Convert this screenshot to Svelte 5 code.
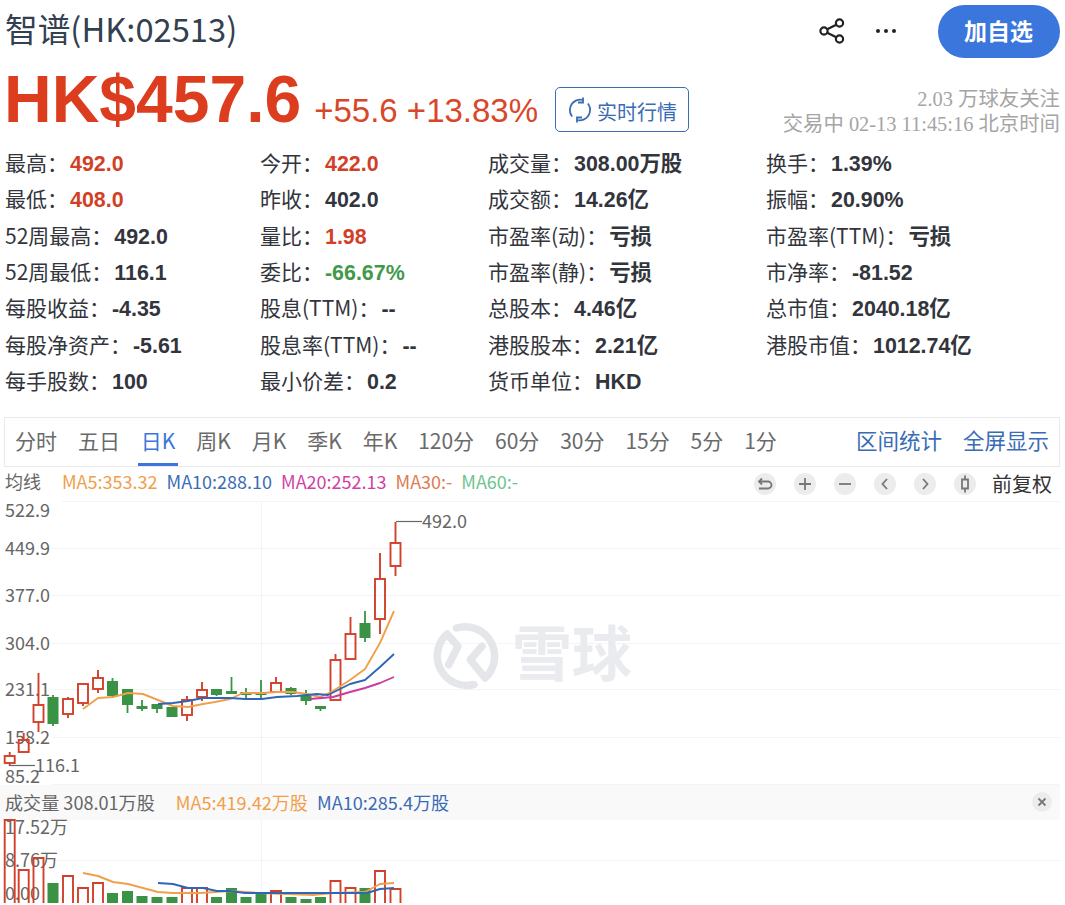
<script>
  const rows = [
    [["最高：","492.0","r"],["今开：","422.0","r"],["成交量：","308.00万股",""],["换手：","1.39%",""]],
    [["最低：","408.0","r"],["昨收：","402.0",""],["成交额：","14.26亿",""],["振幅：","20.90%",""]],
    [["52周最高：","492.0",""],["量比：","1.98","r"],["市盈率(动)：","亏损",""],["市盈率(TTM)：","亏损",""]],
    [["52周最低：","116.1",""],["委比：","-66.67%","g"],["市盈率(静)：","亏损",""],["市净率：","-81.52",""]],
    [["每股收益：","-4.35",""],["股息(TTM)：","--",""],["总股本：","4.46亿",""],["总市值：","2040.18亿",""]],
    [["每股净资产：","-5.61",""],["股息率(TTM)：","--",""],["港股股本：","2.21亿",""],["港股市值：","1012.74亿",""]],
    [["每手股数：","100",""],["最小价差：","0.2",""],["货币单位：","HKD",""],null]
  ];
  const tabs = ["分时","五日","日K","周K","月K","季K","年K","120分","60分","30分","15分","5分","1分"];
  const legend = [["MA5:353.32","c1"],["MA10:288.10","c2"],["MA20:252.13","c3"],["MA30:-","c4"],["MA60:-","c5"]];
  // x, bodyTop, bodyBottom, wickTop, wickBottom, up
  const candles = [
    [9.7,756,763,752,766,1],[23.7,740,752,733,752,1],[38.5,705,722,673,732,1],[53,697,724,695,726,0],
    [68,699,714,697,718,1],[83,684,703,683,706,1],[98,678,689,670,693,1],[112.5,681,696,678,698,0],
    [127.5,689,705,689,713,0],[142,706,709,700,711,0],[157,704,709,704,713,0],[172,707,717,707,717,0],
    [187,700,715,696,721,1],[202,690,697,682,701,1],[216.5,689,695,689,696,0],[231.5,691,694,677,694,0],
    [246,692,695,688,699,0],[261,692,695,680,698,0],[276,683,692,677,692,1],[291,688,694,687,695,0],
    [306,695,701,690,705,0],[320.5,706,709,706,711,0],[335.5,660,700,654,700,1],[350.5,634,659,617,660,1],
    [365,623,638,611,642,0],[380,579,619,553,634,1],[395.5,543,566,522,576,1]
  ];
  const ma5 = "83,709 98,698 113,697 128,693 143,694 158,700 173,706 188,707 203,704 215,702 230,699 243,693 262,693 277,692 293,692 307,694 320,697 333,691 350,680 365,669 380,643 394,611";
  const ma10 = "158,704 173,703 188,701 203,698 230,698 245,699 262,699 277,697 297,696 317,694 328,695 340,689 350,684 365,680 380,667 394,654";
  const ma20 = "310,699 333,697 350,692 365,688 380,683 394,677";
  const grid = [548,595,643,689,737];
  const axis = [["522.9",510],["449.9",548],["377.0",595],["304.0",643],["231.1",689],["158.2",737],["85.2",776]];
  const vols = [
    [9.7,820,1],[23.7,870,1],[38.5,858,1],[53,883,0],[68,876,1],[83,888,1],[98,883,1],[112.5,893,0],[127.5,891,0],
    [142,896,0],[157,897,0],[172,897,0],[187,888,1],[202,888,1],[216.5,897,0],[231.5,888,0],[246,897,0],[261,894,0],
    [276,891,1],[291,897,0],[306,899,0],[320.5,897,0],[335.5,881,1],[350.5,888,1],[365,888,0],[380,871,1],[395.5,889,1]
  ];
  const vma5 = "83,873 98,876 113,882 128,884 143,888 158,892 173,893 200,893 230,891 260,893 313,895 333,893 365,892 380,884 394,883";
  const vma10 = "158,883 173,884 188,888 203,888 217,891 230,891 245,893 367,893 380,889 394,888";
</script>

<div class="page">
  <header class="head">
    <h1>智谱(HK:02513)</h1>
    <div class="actions">
      <svg class="share" viewBox="0 0 26 26" width="26" height="26" aria-hidden="true">
        <circle cx="5" cy="13" r="3.6" />
        <circle cx="20.5" cy="5" r="3.6" />
        <circle cx="20.5" cy="21" r="3.6" />
        <path d="M8.2 11.3 17.3 6.7M8.2 14.7 17.3 19.3" />
      </svg>
      <div class="more"><i></i><i></i><i></i></div>
      <button class="add">加自选</button>
    </div>
  </header>

  <section class="quote">
    <div class="price">HK$457.6</div>
    <div class="change">+55.6 +13.83%</div>
    <div class="realtime">
      <svg viewBox="0 0 26 26" width="26" height="26" aria-hidden="true">
        <path d="M5.2 19.5A10.4 10.4 0 0 1 9 3.6a10.4 10.4 0 0 1 7 -.6M20.8 6.5A10.4 10.4 0 0 1 17 22.4a10.4 10.4 0 0 1 -7 .6" />
        <path d="M16 .5v5h-5M10 25.500v-5h5" />
      </svg>
      <span>实时行情</span>
    </div>
    <div class="meta">
      <div>2.03 万球友关注</div>
      <div>交易中 02-13 11:45:16 北京时间</div>
    </div>
  </section>

  <section class="stats">
    {#each rows as row}
      {#each row as cell}
        {#if cell}
          <div class="stat"><span class="k">{cell[0]}</span><b class={cell[2]}>{cell[1]}</b></div>
        {:else}
          <div></div>
        {/if}
      {/each}
    {/each}
  </section>

  <nav class="tabs">
    {#each tabs as t}
      <span class:active={t === "日K"}>{t}</span>
    {/each}
    <div class="links"><a href="#a">区间统计</a><a href="#b">全屏显示</a></div>
  </nav>

  <div class="legend">
    <span class="ma-title">均线</span>
    {#each legend as l}
      <span class={l[1]}>{l[0]}</span>
    {/each}
    <div class="tools">
      <svg viewBox="0 0 22 22" width="22" height="22" aria-hidden="true"><circle class="tb" cx="11" cy="11" r="11" /><path class="ti" d="M5 15.500h9a3.500 3.500 0 0 0 0-7H5.500M8 5.500l-3 3 3 3" /></svg>
      <svg viewBox="0 0 22 22" width="22" height="22" aria-hidden="true"><circle class="tb" cx="11" cy="11" r="11" /><path class="ti" d="M5 11h12M11 5v12" /></svg>
      <svg viewBox="0 0 22 22" width="22" height="22" aria-hidden="true"><circle class="tb" cx="11" cy="11" r="11" /><path class="ti" d="M5 11h12" /></svg>
      <svg viewBox="0 0 22 22" width="22" height="22" aria-hidden="true"><circle class="tb" cx="11" cy="11" r="11" /><path class="ti" d="M13 6l-4.500 5 4.500 5" /></svg>
      <svg viewBox="0 0 22 22" width="22" height="22" aria-hidden="true"><circle class="tb" cx="11" cy="11" r="11" /><path class="ti" d="M9 6l4.500 5-4.500 5" /></svg>
      <svg viewBox="0 0 22 22" width="22" height="22" aria-hidden="true"><circle class="tb" cx="11" cy="11" r="11" /><path class="ti" d="M8 6.500h6v9H8zM11 2.500v4M11 15.500v4" /></svg>
      <span class="adj">前复权</span>
    </div>
  </div>

  <svg class="chart" viewBox="0 501 1065 284" width="1065" height="284" aria-hidden="true">
    <path class="grid" d="M62 501.500H1060M261.500 501V785" />
    {#each grid as y}<path class="grid" d="M52 {y + 0.5}H1060" />{/each}
    <path class="grid" d="M52 784.500H1060" />

    <g class="logo">
      <path d="M474 684.500A29.500 29.500 0 0 1 447 634L458 646.300 448.700 664.700" />
      <path d="M456.500 628A29.500 29.500 0 0 1 485 678L470.300 659.700 482 646.300" />
    </g>
    <text class="wm" x="512" y="676">雪球</text>

    {#each axis as a}<text class="ax" x="5" y={a[1] + 6.500}>{a[0]}</text>{/each}

    {#each candles as c}
      {#if c[5]}
        <path class="up" d="M{c[0]} {c[3]}V{c[1]}M{c[0]} {c[2]}V{c[4]}" />
        <rect class="up" x={c[0] - 5} y={c[1]} width="10" height={c[2] - c[1]} />
      {:else}
        <path class="dn" d="M{c[0]} {c[3]}V{c[4]}" />
        <rect class="dnf" x={c[0] - 5.500} y={c[1]} width="11" height={c[2] - c[1]} />
      {/if}
    {/each}

    <polyline class="l1" points={ma5} />
    <polyline class="l2" points={ma10} />
    <polyline class="l3" points={ma20} />

    <path class="lead" d="M396 521.500H422" />
    <text class="ax" x="422" y="528">492.0</text>
    <path class="lead" d="M9 765.500H35" />
    <text class="ax" x="35" y="772">116.1</text>
  </svg>

  <div class="volbar">
    <span class="ma-title">成交量 308.01万股</span>
    <span class="c1">MA5:419.42万股</span>
    <span class="c2">MA10:285.4万股</span>
    <svg class="close" viewBox="0 0 20 20" width="20" height="20" aria-hidden="true"><circle cx="10" cy="10" r="10" /><path d="M6.500 6.500l7 7M13.500 6.500l-7 7" /></svg>
  </div>

  <svg class="chart" viewBox="0 820 1065 85" width="1065" height="85" aria-hidden="true">
    <path class="grid" d="M52 860.500H1060M261.500 820V905" />
    <text class="ax" x="5" y="834">17.52万</text>
    <text class="ax" x="5" y="867">8.76万</text>
    <text class="ax" x="5" y="900">0.00</text>
    {#each vols as v}
      {#if v[2]}
        <path class="up" d="M{v[0] - 5} 903V{v[1]}H{v[0] + 5}V903" />
      {:else}
        <rect class="dnf" x={v[0] - 5.500} y={v[1]} width="11" height={903 - v[1]} />
      {/if}
    {/each}
    <polyline class="l1" points={vma5} />
    <polyline class="l2" points={vma10} />
  </svg>
</div>

<style>
  :global(body) { margin: 0; background: #fff; }
  .page {
    width: 1065px;
    height: 905px;
    overflow: hidden;
    font-family: "Noto Sans CJK SC", "Noto Sans", sans-serif;
    color: #33353c;
  }
  .head {
    height: 58px;
    display: flex;
    justify-content: space-between;
    padding-right: 5px;
    box-sizing: border-box;
  }
  h1 {
    margin: 0;
    padding: 5px 0 0 5px;
    font-size: 32.700px;
    line-height: 46px;
    font-weight: 400;
    color: #33404f;
  }
  .actions { display: flex; align-items: center; padding-top: 5px; }
  .share { margin: -2px 31px 0 0; }
  .share circle { fill: none; stroke: #222; stroke-width: 2.2; }
  .share path { fill: none; stroke: #222; stroke-width: 2.2; }
  .more { display: flex; gap: 4px; margin: -2px 42px 0 0; }
  .more i { width: 4px; height: 4px; border-radius: 50%; background: #222; }
  .add {
    width: 122px;
    height: 53px;
    border: 0;
    border-radius: 27px;
    background: #3a76db;
    color: #fff;
    font: 700 23px "Noto Sans CJK SC", sans-serif;
    padding: 0 1px 3px 0;
  }
  .quote {
    height: 87px;
    display: flex;
    align-items: flex-start;
    padding-left: 4px;
    box-sizing: border-box;
  }
  .price {
    font: 700 66px/66px "Liberation Sans", sans-serif;
    color: #dc3d1f;
    margin-top: 8px;
  }
  .change {
    font: 400 33px/40px "Liberation Sans", sans-serif;
    color: #d9472b;
    margin: 33px 0 0 13px;
  }
  .realtime {
    display: flex;
    align-items: center;
    width: 134px;
    height: 45px;
    box-sizing: border-box;
    margin: 29px 0 0 17px;
    padding-left: 11px;
    border: 1px solid #3a6cb5;
    border-radius: 5px;
    color: #3a6cb5;
    font-size: 20px;
    gap: 4px;
  }
  .realtime svg { flex: none; }
  .realtime span { padding-top: 3px; }
  .realtime path { fill: none; stroke: #3a6cb5; stroke-width: 1.8; }
  .meta {
    margin: 29px 5px 0 auto;
    text-align: right;
    font: 400 20.400px/25px "Liberation Serif", "Noto Sans CJK SC", serif;
    color: #a5a5a5;
  }
  .stats {
    display: grid;
    grid-template-columns: 255px 228px 278px 1fr;
    grid-auto-rows: 36.300px;
    padding-left: 5px;
    font-size: 21px;
    align-items: center;
  }
  .stat { white-space: nowrap; line-height: 36px; }
  .k { color: #33353c; font-weight: 400; }
  .stat b {
    font-family: "Liberation Sans", "Noto Sans CJK SC", sans-serif;
    font-size: 21.400px;
    font-weight: 700;
    color: #33353c;
    margin-left: 2px;
  }
  .stat b.r { color: #d23f27; }
  .stat b.g { color: #3f9a4b; }
  .tabs {
    margin: 17.900px 5px 0 4px;
    height: 50px;
    box-sizing: border-box;
    border: 1px solid #e8e9eb;
    display: flex;
    align-items: stretch;
    gap: 14.900px;
    padding: 0 10px 0 7px;
    font-size: 21px;
    color: #6a6a6a;
  }
  .tabs span { padding: 0 3px; line-height: 44px; }
  .tabs .active { color: #3a76db; border-bottom: 3px solid #3a76db; margin-bottom: -1px; height: 45px; }
  .links { margin-left: auto; display: flex; gap: 21px; line-height: 44px; font-size: 21.500px; }
  .links a { color: #3a6cb5; text-decoration: none; }
  .legend {
    height: 34px;
    padding: 0 13px 0 5px;
    display: flex;
    align-items: center;
    font-size: 18px;
    gap: 9px;
    white-space: nowrap;
  }
  .legend > span { margin-bottom: 6px; }
  .legend > .ma-title { color: #666; margin-right: 12px; }
  .c1 { color: #f0a04b; }
  .c2 { color: #3a6cb5; }
  .c3 { color: #d23fa5; }
  .c4 { color: #e07a50; }
  .c5 { color: #6dc48f; }
  .tools { margin-left: auto; display: flex; align-items: center; gap: 18px; }
  .tb { fill: #ececec; }
  .ti { fill: none; stroke: #777; stroke-width: 1.800; }
  .adj { font-size: 20px; color: #333; margin-left: -2px; }
  .chart { display: block; overflow: visible; }
  .grid { fill: none; stroke: #f3f4f5; stroke-width: 1; }
  .logo path { fill: none; stroke: #e4e6ea; stroke-width: 7.500; stroke-linecap: round; stroke-linejoin: round; }
  .wm { font-size: 60px; font-weight: 700; fill: #e9ebef; }
  .ax { font-size: 18px; fill: #666; }
  .up { fill: none; stroke: #d2402a; stroke-width: 1.900; }
  .dn { fill: none; stroke: #3a9244; stroke-width: 1.800; }
  .dnf { fill: #3a9244; }
  .l1, .l2, .l3 { fill: none; stroke-width: 1.900; stroke-linejoin: round; }
  .l1 { stroke: #f0a04b; }
  .l2 { stroke: #2f66b8; }
  .l3 { stroke: #c93ba0; }
  .lead { fill: none; stroke: #666; stroke-width: 1.200; }
  .volbar {
    width: 1060px;
    height: 35px;
    background: #f9f9fa;
    display: flex;
    align-items: center;
    padding: 0 8px 0 5px;
    box-sizing: border-box;
    font-size: 18.100px;
    gap: 9px;
    white-space: nowrap;
  }
  .volbar .ma-title { color: #666; margin-right: 12px; }
  .close { margin-left: auto; }
  .close circle { fill: #ececec; }
  .close path { fill: none; stroke: #777; stroke-width: 1.800; }
</style>
